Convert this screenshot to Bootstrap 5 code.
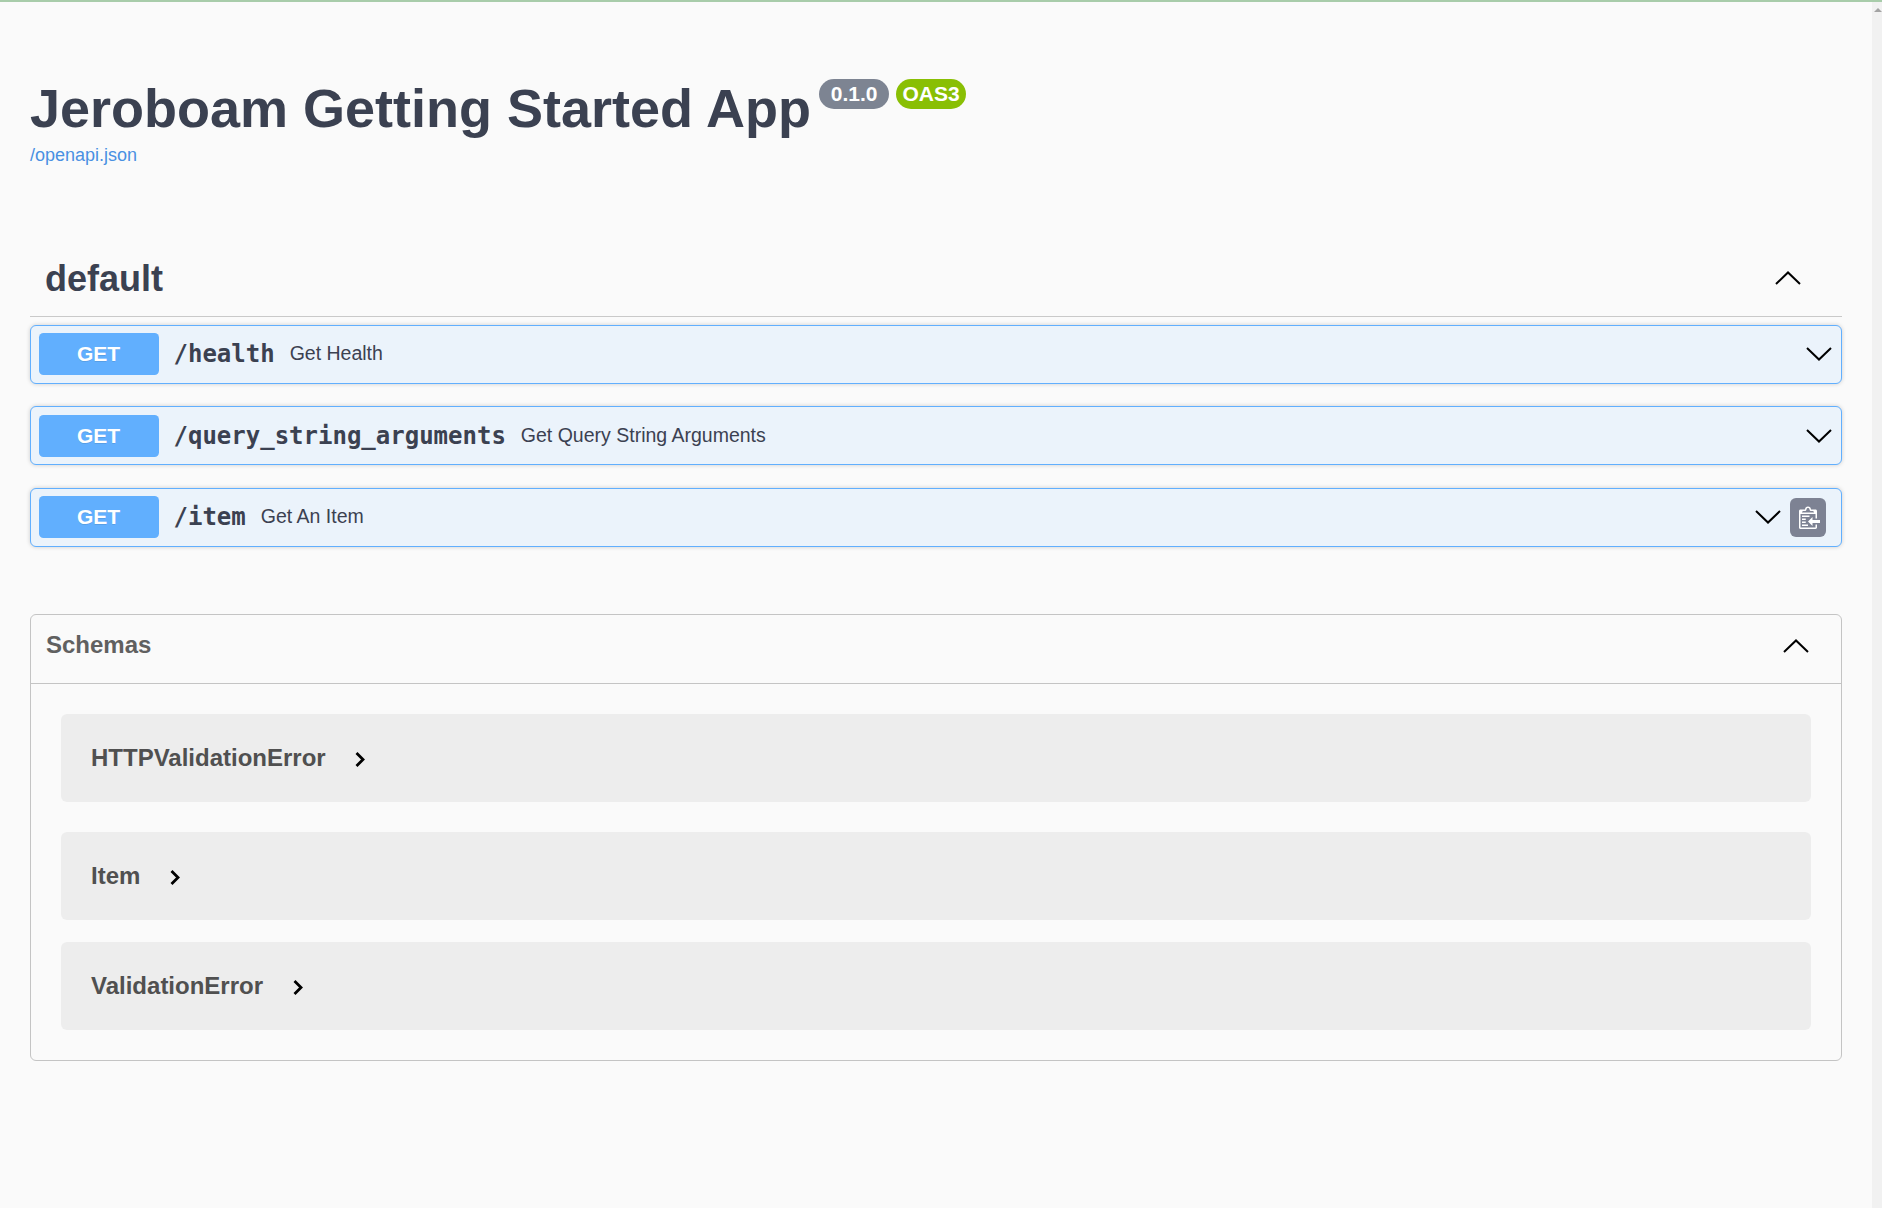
<!DOCTYPE html>
<html lang="en">
<head>
  <meta charset="UTF-8" />
  <meta name="viewport" content="width=device-width, initial-scale=1.0"/>
  <title>Jeroboam Getting Started App - Swagger UI</title>
  <link href="https://cdn.jsdelivr.net/npm/bootstrap@5.3.0/dist/css/bootstrap.min.css" rel="stylesheet" />
  <style>
    html, body {
      height: 100%;
      overflow: hidden;
    }

    body {
      background-color: #fafafa;
      font-family: "Liberation Sans", Arial, sans-serif;
      color: #3b4151;
    }

    .top-line {
      height: 2px;
      background-color: #a8ccaa;
    }

    .page-wrap {
      height: 1206px;
    }

    .page-main {
      padding: 75px 30px 0;
    }

    .fake-scrollbar {
      width: 10px;
      background-color: #f1f1f1;
      padding-top: 6px;
    }

    .fake-scrollbar span {
      display: block;
      width: 0;
      margin-left: 2px;
      border-left: 4px solid transparent;
      border-right: 4px solid transparent;
      border-bottom: 4px solid #a3a3a3;
    }

    .api-title {
      font-size: 54px;
      font-weight: 700;
      line-height: 1.15;
      color: #3b4151;
      margin: 0 1px 0 0;
    }

    .ver-badge {
      width: 70px;
      height: 30px;
      margin-left: 7px;
      font-size: 21px;
      font-weight: 700;
      line-height: 30px;
      text-align: center;
      border-radius: 24px;
      color: #fff;
      background-color: #7d8492;
      position: relative;
      top: 2px;
      vertical-align: top;
    }

    .ver-badge.oas {
      background-color: #89bf04;
    }

    .spec-link {
      font-size: 18px;
      color: #4990e2;
      text-decoration: none;
      display: inline-block;
      margin-top: 3px;
    }

    .tag-head {
      height: 76px;
      margin-top: 72px;
      margin-bottom: 7.5px;
      padding: 0 15px;
      border-bottom: 1px solid #c9c9c9;
    }

    .tag-name {
      font-size: 36px;
      font-weight: 700;
      margin: 0;
    }

    .up-arrow {
      margin: 0 26px 2px 0;
    }

    .op-block {
      height: 59px;
      margin-bottom: 22.5px;
      padding: 7px 7px 7px 7.5px;
      background-color: #ebf3fb;
      border: 1px solid #61affe;
      border-radius: 6px;
      box-shadow: 0 0 4.5px rgba(0, 0, 0, .19);
    }

    .op-method {
      width: 120px;
      height: 42px;
      line-height: 42px;
      font-size: 21px;
      font-weight: 700;
      text-align: center;
      color: #fff;
      background-color: #61affe;
      border-radius: 4.5px;
      text-shadow: 0 1px 0 rgba(0, 0, 0, .1);
    }

    .op-path {
      font-family: "DejaVu Sans Mono", monospace;
      font-size: 24px;
      font-weight: 700;
      padding: 0 15px;
    }

    .op-desc {
      font-size: 19.5px;
    }

    .down-arrow {
      margin-right: 2px;
    }

    .copy-btn {
      width: 36px;
      height: 39px;
      margin-left: 9px;
      margin-right: 8px;
      background-color: #7d8293;
      border-radius: 6px;
    }

    .schema-box {
      height: 447px;
      margin-top: 67.5px;
      border: 1px solid #c4c4c4;
      border-radius: 6px;
    }

    .schema-head {
      height: 69px;
      padding: 0 15px;
      border-bottom: 1px solid #c4c4c4;
    }

    .schema-title {
      font-size: 24px;
      font-weight: 700;
      color: #606060;
      margin: 0 0 8px;
    }

    .schema-arrow {
      margin: 0 17px 6px 0;
    }

    .schema-list {
      padding: 30px 30px 0;
    }

    .model-row {
      height: 88px;
      padding-left: 30px;
      background-color: #ededed;
      border-radius: 6px;
    }

    .model-row.gap-wide {
      margin-bottom: 30px;
    }

    .model-row.gap-narrow {
      margin-bottom: 22px;
    }

    .model-name {
      font-size: 24px;
      font-weight: 700;
      color: #505050;
      margin-right: 29.5px;
    }

    .model-arrow {
      margin-top: 3px;
    }
  </style>
</head>
<body>

  <div class="top-line"></div>
  <div class="page-wrap d-flex">
    <main class="page-main flex-grow-1">

      <div class="d-flex align-items-start">
        <h1 class="api-title">Jeroboam Getting Started App</h1><span class="ver-badge">0.1.0</span><span class="ver-badge oas">OAS3</span>
      </div>
      <a class="spec-link" href="#">/openapi.json</a>

      <div class="tag-head d-flex align-items-center justify-content-between">
        <h3 class="tag-name">default</h3>
        <svg class="up-arrow" width="26" height="14" viewBox="0 0 26 14"><path d="M1 13 13 1.5 25 13" fill="none" stroke="#000" stroke-width="2"/></svg>
      </div>

      <div class="op-block d-flex align-items-center">
        <span class="op-method">GET</span>
        <span class="op-path">/health</span>
        <span class="op-desc">Get Health</span>
        <svg class="down-arrow ms-auto" width="26" height="14" viewBox="0 0 26 14"><path d="M1 1 13 12.5 25 1" fill="none" stroke="#000" stroke-width="2"/></svg>
      </div>
      <div class="op-block d-flex align-items-center">
        <span class="op-method">GET</span>
        <span class="op-path">/query_string_arguments</span>
        <span class="op-desc">Get Query String Arguments</span>
        <svg class="down-arrow ms-auto" width="26" height="14" viewBox="0 0 26 14"><path d="M1 1 13 12.5 25 1" fill="none" stroke="#000" stroke-width="2"/></svg>
      </div>
      <div class="op-block d-flex align-items-center">
        <span class="op-method">GET</span>
        <span class="op-path">/item</span>
        <span class="op-desc">Get An Item</span>
        <svg class="ms-auto" width="26" height="14" viewBox="0 0 26 14"><path d="M1 1 13 12.5 25 1" fill="none" stroke="#000" stroke-width="2"/></svg>
        <div class="copy-btn d-flex align-items-center justify-content-center">
          <svg width="24" height="24" viewBox="0 0 16 16"><g transform="translate(2 0)"><path fill="#fff" fill-rule="evenodd" d="M2 13h4v1H2v-1zm5-6H2v1h5V7zm2 3V8l-3 3 3 3v-2h5v-2H9zM4.5 9H2v1h2.5V9zM2 12h2.5v-1H2v1zm9 1h1v2c-.02.28-.11.52-.3.7-.19.18-.42.28-.7.3H1c-.55 0-1-.45-1-1V4c0-.55.45-1 1-1h3c0-1.11.89-2 2-2 1.11 0 2 .89 2 2h3c.55 0 1 .45 1 1v5h-1V6H1v9h10v-2zM2 5h8c0-.55-.45-1-1-1H8c-.55 0-1-.45-1-1s-.45-1-1-1-1 .45-1 1-.45 1-1 1H3c-.55 0-1 .45-1 1z"/></g></svg>
        </div>
      </div>

      <section class="schema-box">
        <div class="schema-head d-flex align-items-center justify-content-between">
          <h4 class="schema-title">Schemas</h4>
          <svg class="schema-arrow" width="26" height="14" viewBox="0 0 26 14"><path d="M1 13 13 1.5 25 13" fill="none" stroke="#000" stroke-width="2"/></svg>
        </div>
        <div class="schema-list">
          <div class="model-row gap-wide d-flex align-items-center">
            <span class="model-name">HTTPValidationError</span>
            <svg class="model-arrow" width="10" height="15" viewBox="0 0 10 15"><path d="M1.5 1 8 7.5 1.5 14" fill="none" stroke="#000" stroke-width="2.8"/></svg>
          </div>
          <div class="model-row gap-narrow d-flex align-items-center">
            <span class="model-name">Item</span>
            <svg class="model-arrow" width="10" height="15" viewBox="0 0 10 15"><path d="M1.5 1 8 7.5 1.5 14" fill="none" stroke="#000" stroke-width="2.8"/></svg>
          </div>
          <div class="model-row d-flex align-items-center">
            <span class="model-name">ValidationError</span>
            <svg class="model-arrow" width="10" height="15" viewBox="0 0 10 15"><path d="M1.5 1 8 7.5 1.5 14" fill="none" stroke="#000" stroke-width="2.8"/></svg>
          </div>
        </div>
      </section>

    </main>
    <aside class="fake-scrollbar"><span></span></aside>
  </div>

  <script src="https://cdn.jsdelivr.net/npm/bootstrap@5.3.0/dist/js/bootstrap.bundle.min.js"></script>
</body>
</html>
